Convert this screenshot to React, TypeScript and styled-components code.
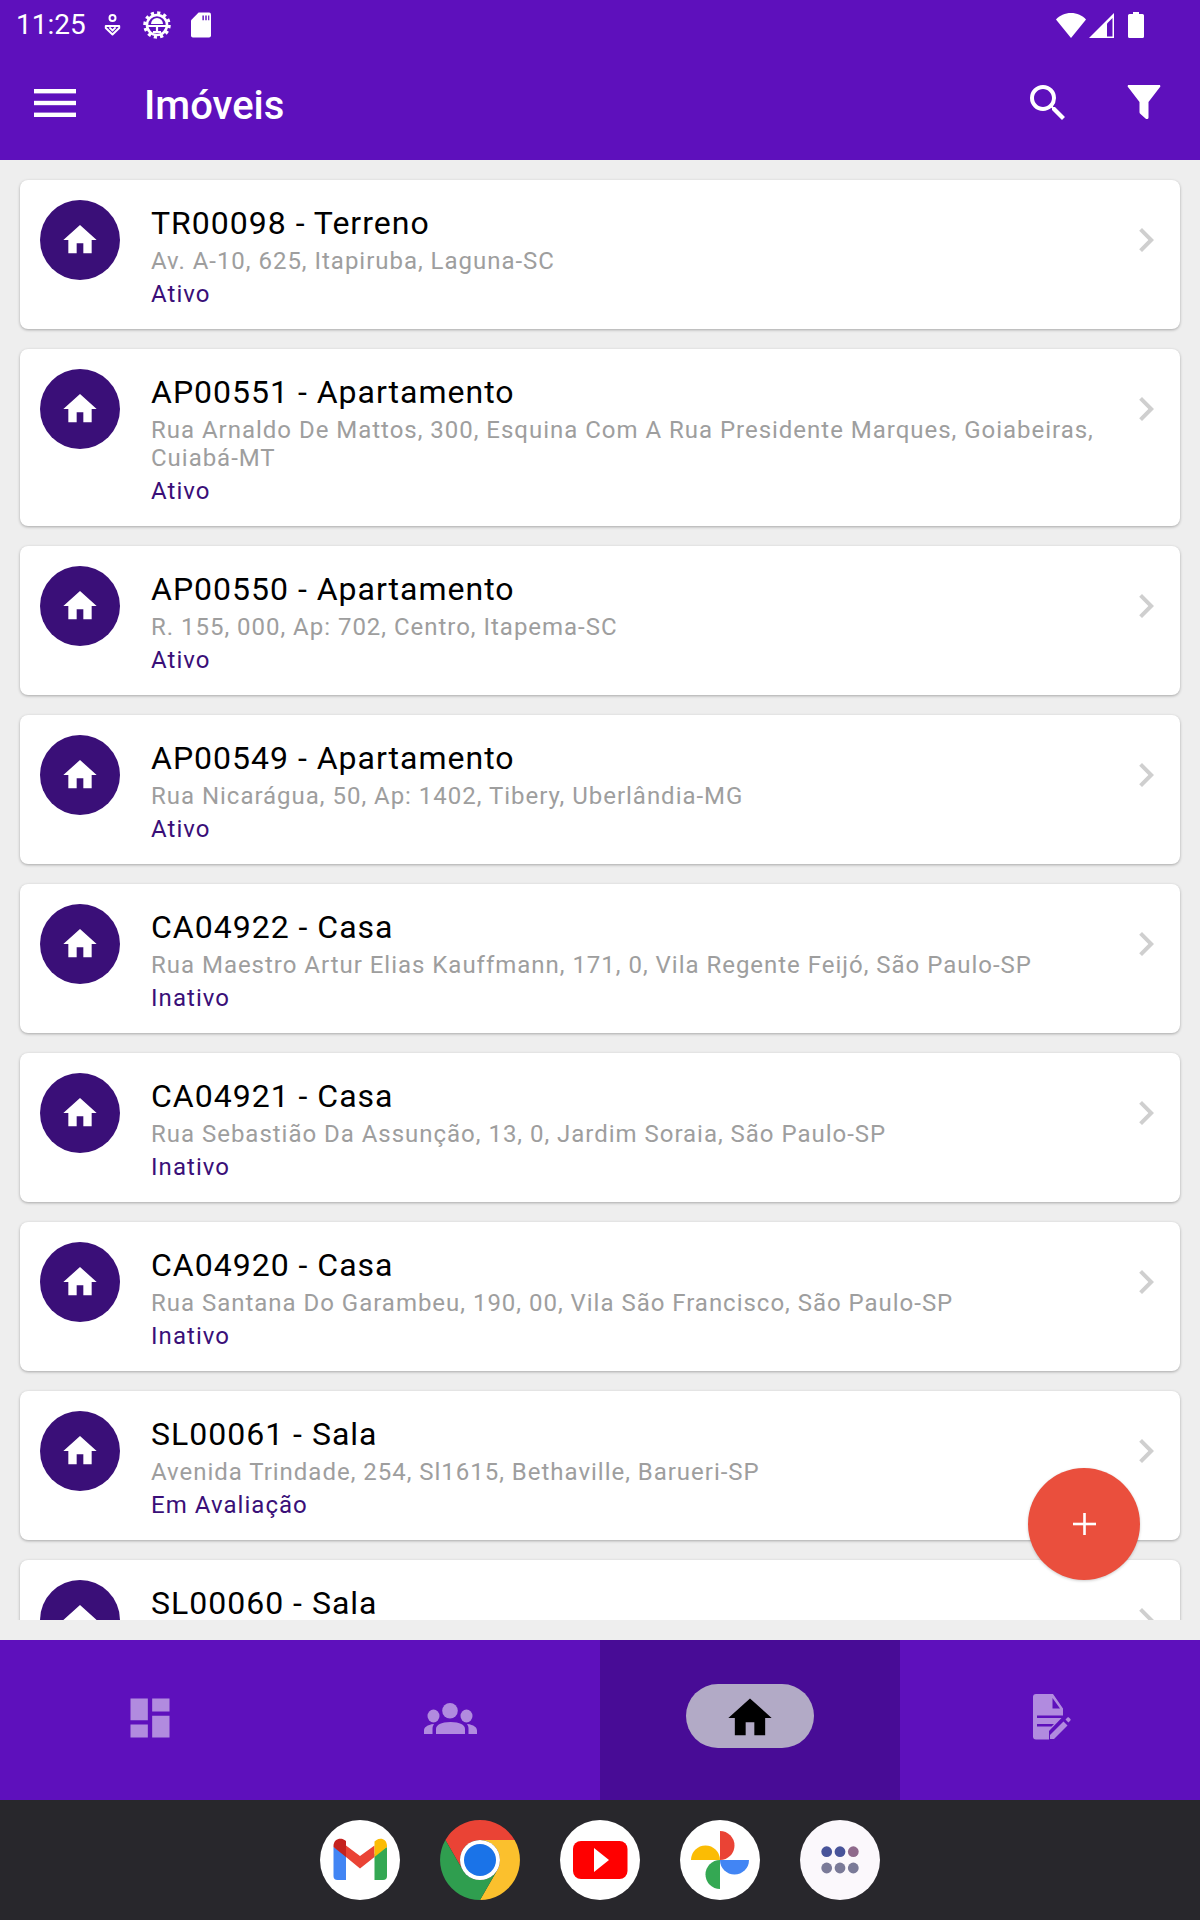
import React from "react";
import styled, { createGlobalStyle } from "styled-components";
import { MdHome, MdChevronRight, MdSearch, MdDashboard } from "react-icons/md";

const Global = createGlobalStyle`
  html, body { margin: 0; padding: 0; background: #eeeeee; }
  * { box-sizing: border-box; }
  body { font-family: Roboto, "Liberation Sans", sans-serif; }
`;

const Page = styled.div`
  width: 1200px;
  height: 1920px;
  display: flex;
  flex-direction: column;
  position: relative;
  overflow: hidden;
  background: #eeeeee;
`;
const Header = styled.header`
  height: 160px;
  background: #5e10bc;
  color: #fff;
  display: flex;
  flex-direction: column;
  flex: none;
`;
const StatusBar = styled.div`
  height: 50px;
  padding: 0 56px 0 16px;
  display: flex;
  align-items: center;
  font-size: 28px;
  line-height: 50px;
`;
const Time = styled.span`
  width: 70px;
  margin-right: 18px;
`;
const StatusIcon = styled.svg`
  display: block;
  flex: none;
  margin-right: ${(p: { $gap?: number }) => p.$gap ?? 0}px;
`;
const Spacer = styled.div`
  flex: 1;
`;
const Toolbar = styled.div`
  flex: 1;
  display: flex;
  align-items: center;
  padding: 0 32px 4px 34px;
`;
const Title = styled.h1`
  margin: 6px 0 0 68px;
  font-size: 40px;
  font-weight: 500;
  line-height: 48px;
  flex: 1;
`;
const IconButton = styled.button`
  width: 48px;
  height: 48px;
  padding: 0;
  border: 0;
  background: none;
  color: #fff;
  display: flex;
  align-items: center;
  justify-content: center;
  margin-left: ${(p: { $gap?: number }) => p.$gap ?? 0}px;
`;
const Content = styled.main`
  height: 1460px;
  flex: none;
  overflow: hidden;
  padding: 20px 20px 0;
  display: flex;
  flex-direction: column;
  gap: 20px;
`;
const Card = styled.article`
  flex: none;
  background: #fff;
  border-radius: 8px;
  box-shadow: 0 1px 3px rgba(0, 0, 0, 0.3);
  padding: 20px 10px 21px 20px;
  display: flex;
  align-items: flex-start;
`;
const Avatar = styled.div`
  width: 80px;
  height: 80px;
  border-radius: 50%;
  flex: none;
  background: #3a0f78;
  color: #fff;
  display: flex;
  align-items: center;
  justify-content: center;
`;
const CardBody = styled.div`
  flex: 1;
  min-width: 0;
  margin-left: 31px;
`;
const CardTitle = styled.div`
  font-size: 32px;
  line-height: 38px;
  padding-top: 4px;
  margin-bottom: 5px;
  color: #000;
  letter-spacing: 1px;
`;
const Address = styled.div`
  font-size: 24px;
  line-height: 28px;
  color: #9e9e9e;
  letter-spacing: 0.98px;
  margin-bottom: 5px;
`;
const Status = styled.div`
  font-size: 24px;
  line-height: 28px;
  color: #3a0f78;
  letter-spacing: 1.05px;
`;
const Chevron = styled.div`
  flex: none;
  margin-top: 16px;
  color: #cfcfcf;
  display: flex;
`;
const Fab = styled.button`
  position: absolute;
  left: 1028px;
  top: 1468px;
  width: 112px;
  height: 112px;
  border: 0;
  padding: 0;
  border-radius: 50%;
  background: #ea4f3d;
  display: flex;
  align-items: center;
  justify-content: center;
  box-shadow: 0 1px 3px rgba(0, 0, 0, 0.2);
`;
const BottomNav = styled.nav`
  flex: none;
  height: 160px;
  margin-top: 20px;
  background: #5e10bc;
  display: grid;
  grid-template-columns: repeat(4, 1fr);
`;
const Tab = styled.div<{ $active?: boolean }>`
  display: flex;
  justify-content: center;
  align-items: flex-start;
  padding-top: 44px;
  background: ${(p) => (p.$active ? "#480c96" : "transparent")};
`;
const Pill = styled.div<{ $active?: boolean }>`
  width: 128px;
  height: 64px;
  padding-top: 4px;
  border-radius: 32px;
  background: ${(p) => (p.$active ? "#b2aac6" : "transparent")};
  color: ${(p) => (p.$active ? "#000" : "#b18bdf")};
  display: flex;
  align-items: center;
  justify-content: center;
`;
const Dock = styled.footer`
  flex: none;
  height: 120px;
  background: #28272c;
  display: flex;
  align-items: center;
  justify-content: center;
  gap: 40px;
`;
const DockApp = styled.svg`
  display: block;
  width: 80px;
  height: 80px;
  flex: none;
`;

const items = [
  { t: "TR00098 - Terreno", a: "Av. A-10, 625, Itapiruba, Laguna-SC", s: "Ativo" },
  { t: "AP00551 - Apartamento", a: "Rua Arnaldo De Mattos, 300, Esquina Com A Rua Presidente Marques, Goiabeiras, Cuiabá-MT", s: "Ativo" },
  { t: "AP00550 - Apartamento", a: "R. 155, 000, Ap: 702, Centro, Itapema-SC", s: "Ativo" },
  { t: "AP00549 - Apartamento", a: "Rua Nicarágua, 50, Ap: 1402, Tibery, Uberlândia-MG", s: "Ativo" },
  { t: "CA04922 - Casa", a: "Rua Maestro Artur Elias Kauffmann, 171, 0, Vila Regente Feijó, São Paulo-SP", s: "Inativo" },
  { t: "CA04921 - Casa", a: "Rua Sebastião Da Assunção, 13, 0, Jardim Soraia, São Paulo-SP", s: "Inativo" },
  { t: "CA04920 - Casa", a: "Rua Santana Do Garambeu, 190, 00, Vila São Francisco, São Paulo-SP", s: "Inativo" },
  { t: "SL00061 - Sala", a: "Avenida Trindade, 254, Sl1615, Bethaville, Barueri-SP", s: "Em Avaliação" },
  { t: "SL00060 - Sala", a: "Avenida Trindade, 254, Sl1614, Bethaville, Barueri-SP", s: "Em Avaliação" },
];

const Hamburger = () => (
  <svg width="42" height="28" viewBox="0 0 42 28" fill="#fff">
    <rect y="0" width="42" height="4.4" />
    <rect y="11.8" width="42" height="4.4" />
    <rect y="23.6" width="42" height="4.4" />
  </svg>
);

const Funnel = () => (
  <svg width="48" height="48" viewBox="0 0 48 48" fill="#fff">
    <path d="M8 6h32l.4 1.6L28.5 23v15.5c0 1-.8 1.5-1.6 1.5-.5 0-1-.2-1.4-.6l-5-4.4c-.6-.5-1-1-1-1.8V23L7.6 7.6z" />
  </svg>
);

const PeopleIcon = () => (
  <svg width="80" height="56" viewBox="0 0 80 56" fill="currentColor">
    <circle cx="40" cy="20.700" r="7.800" />
    <ellipse cx="23.500" cy="26" rx="6" ry="6.500" />
    <ellipse cx="56.500" cy="26" rx="6" ry="6.500" />
    <path d="M26 44v-5c0-4 5-7 14.500-7S55 35 55 39v5z" />
    <path d="M14 44v-3.500c0-3 3-5.800 10-6.500-1 1.500-1.500 3-1.500 5v5z" />
    <path d="M67 44v-3.500c0-3-3-5.800-10-6.500 1 1.500 1.500 3 1.500 5v5z" />
  </svg>
);

const DocEditIcon = () => (
  <svg width="64" height="60" viewBox="-2 0 64 60" fill="currentColor">
    <path d="M16 6h17l10 14.500v8L29 43v8.500H16a3 3 0 0 1-3-3V9a3 3 0 0 1 3-3z" />
    <path d="M32.500 10v10.500h7.500zM17 27.500h26v2.500H17zM17 36h17l-2.500 2.500H17z" fill="#5e10bc" />
    <path d="M30 47l13.500-13.500 4 4L34 51h-4z" />
    <path d="M45.500 31.500l2-2c.4-.4 1-.4 1.400 0l1.500 1.500c.4.4.4 1 0 1.400l-2 2z" />
  </svg>
);

const App = () => (
  <Page>
    <Global />
    <Header>
      <StatusBar>
        <Time>11:25</Time>
        <StatusIcon width="17" height="24" viewBox="0 0 17 24" $gap={22} fill="none" stroke="#fff" strokeWidth="2">
          <circle cx="8.5" cy="5" r="3" />
          <path d="M1.8 13h13.4v2L8.5 21.5 1.8 15z" strokeLinejoin="round" />
          <path d="M5.4 14.4l3.100 3 3.100-3" />
        </StatusIcon>
        <StatusIcon width="28" height="28" viewBox="0 0 28 28" $gap={20} fill="none" stroke="#fff">
          <circle cx="14" cy="14" r="11.500" strokeWidth="4.500" strokeDasharray="3 3" />
          <circle cx="14" cy="14" r="10" strokeWidth="2.600" />
          <path d="M5 15h18M14 15v7M10 21h8" strokeWidth="2.200" />
          <path d="M8 13a6 6 0 0 1 12 0z" fill="#fff" stroke="none" />
        </StatusIcon>
        <StatusIcon width="20" height="26" viewBox="0 0 21 26" fill="#fff">
          <path d="M8 0h11a2 2 0 0 1 2 2v22a2 2 0 0 1-2 2H2a2 2 0 0 1-2-2V8z" />
          <path d="M12 3h1.500v5H12zM15 3h1.500v5H15zM18 3h1.200v5H18z" fill="#5e10bc" />
        </StatusIcon>
        <Spacer />
        <StatusIcon width="30" height="25" viewBox="0 0 30 25" $gap={3} fill="#fff">
          <path d="M0 6.500C3.500 2.500 9 0 15 0s11.500 2.500 15 6.500L15 25z" />
        </StatusIcon>
        <StatusIcon width="25" height="25" viewBox="0 0 25 25" $gap={14}>
          <path d="M0 25L25 0v25z" fill="#fff" />
          <path d="M18 10.500L23.500 5v18.500H18z" fill="#5e10bc" />
        </StatusIcon>
        <StatusIcon width="16" height="26" viewBox="0 0 16 26" fill="#fff">
          <path d="M5 0h6v2h3.500A1.500 1.500 0 0 1 16 3.500v21a1.500 1.500 0 0 1-1.500 1.500h-13A1.500 1.500 0 0 1 0 24.500v-21A1.500 1.500 0 0 1 1.500 2H5z" />
        </StatusIcon>
      </StatusBar>
      <Toolbar>
        <Hamburger />
        <Title>Imóveis</Title>
        <IconButton aria-label="Buscar"><MdSearch size={48} /></IconButton>
        <IconButton aria-label="Filtrar" $gap={48}><Funnel /></IconButton>
      </Toolbar>
    </Header>
    <Content>
      {items.map((it) => (
        <Card key={it.t}>
          <Avatar><MdHome size={40} /></Avatar>
          <CardBody>
            <CardTitle>{it.t}</CardTitle>
            <Address>{it.a}</Address>
            <Status>{it.s}</Status>
          </CardBody>
          <Chevron><MdChevronRight size={48} /></Chevron>
        </Card>
      ))}
    </Content>
    <Fab aria-label="Adicionar">
      <svg width="23" height="22" viewBox="0 0 23 22" fill="#fff">
        <rect x="0" y="9.700" width="23" height="2.600" />
        <rect x="10.200" y="0" width="2.600" height="22" />
      </svg>
    </Fab>
    <BottomNav>
      <Tab><Pill><MdDashboard size={52} /></Pill></Tab>
      <Tab><Pill><PeopleIcon /></Pill></Tab>
      <Tab $active><Pill $active><MdHome size={52} /></Pill></Tab>
      <Tab><Pill><DocEditIcon /></Pill></Tab>
    </BottomNav>
    <Dock>
      <DockApp viewBox="0 0 80 80">
        <circle cx="40" cy="40" r="40" fill="#fff" />
        <path d="M13.500 27v29a4 4 0 0 0 4 4H26V34z" fill="#4285f4" />
        <path d="M54.500 34v26H63a4 4 0 0 0 4-4V27z" fill="#34a853" />
        <path d="M26 25.500L40 36l14.500-10.500V37L40 48.500 26 37z" fill="#ea4335" />
        <path d="M13.500 26c0-7 7-9 11-6l1.500 1v16L13.500 27z" fill="#c5221f" />
        <path d="M54.500 21.500l2-1.500c4-3 10.500-1 10.500 6v1L54.500 37z" fill="#fbbc04" />
      </DockApp>
      <DockApp viewBox="0 0 80 80">
        <path d="M40 0A40 40 0 0 1 74.600 20H40A20 20 0 0 0 22.700 50L5.400 20A40 40 0 0 1 40 0z" fill="#ea4335" />
        <path d="M74.600 20A40 40 0 0 1 40 80L57.300 50A20 20 0 0 0 40 20z" fill="#fbc02d" />
        <path d="M5.400 20A40 40 0 0 0 40 80L57.300 50A20 20 0 0 1 22.700 50z" fill="#2f9e4f" />
        <circle cx="40" cy="40" r="20" fill="#fff" />
        <circle cx="40" cy="40" r="16" fill="#1a73e8" />
      </DockApp>
      <DockApp viewBox="0 0 80 80">
        <circle cx="40" cy="40" r="40" fill="#fff" />
        <rect x="13" y="21" width="54.500" height="38" rx="8" fill="#ff0000" />
        <path d="M34 28l15 12-15 12z" fill="#fff" />
      </DockApp>
      <DockApp viewBox="0 0 80 80">
        <circle cx="40" cy="40" r="40" fill="#fff" />
        <path d="M40 11A14.500 14.500 0 0 1 40 40z" fill="#ea4335" />
        <path d="M11 40A14.500 14.500 0 0 1 40 40z" fill="#fbbc04" />
        <path d="M40 40H69A14.500 14.500 0 0 1 40 40z" fill="#4285f4" />
        <path d="M40 40V69A14.500 14.500 0 0 1 40 40z" fill="#34a853" />
      </DockApp>
      <DockApp viewBox="0 0 80 80">
        <circle cx="40" cy="40" r="40" fill="#fbf8fc" />
        <circle cx="26.700" cy="31.700" r="5.400" fill="#48549a" />
        <circle cx="40" cy="31.700" r="5.400" fill="#48549a" />
        <circle cx="53.300" cy="31.700" r="5.400" fill="#8f6a8c" />
        <circle cx="26.700" cy="48" r="5.400" fill="#7a7a98" />
        <circle cx="40" cy="48" r="5.400" fill="#7a7a98" />
        <circle cx="53.300" cy="48" r="5.400" fill="#7a7a98" />
      </DockApp>
    </Dock>
  </Page>
);

export default App;
